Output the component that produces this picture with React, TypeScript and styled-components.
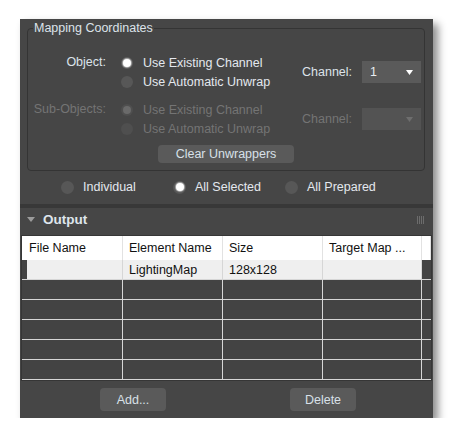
import React from "react";
import styled, { createGlobalStyle } from "styled-components";

const GlobalStyle = createGlobalStyle`
  html, body { margin: 0; padding: 0; background: #ffffff; }
  body { font-family: "Liberation Sans", Arial, sans-serif; font-size: 12.5px; }
  * { box-sizing: border-box; }
`;

const Page = styled.div`
  padding: 19px 0 0 20px;
`;

const Panel = styled.div`
  width: 413px;
  height: 399px;
  background: #464646;
  display: flex;
  flex-direction: column;
  box-shadow: 5px 5px 8px rgba(0, 0, 0, 0.45);
`;

const TopSection = styled.div`
  padding: 1px 8px 0 7px;
`;

const GroupBox = styled.fieldset`
  margin: 0;
  padding: 17px 3px 5px 0;
  border: 1px solid #343434;
  border-radius: 4px;
  min-width: 0;
`;

const Legend = styled.legend`
  margin-left: 5px;
  padding: 0 1px;
  line-height: 16px;
  color: #dce3ea;
`;

const GroupGrid = styled.div`
  display: grid;
  grid-template-columns: 78px 196px 60px 59px;
  grid-template-rows: 38px 38px 18px;
  row-gap: 9px;
`;

const FieldLabel = styled.div<{ $disabled?: boolean }>`
  text-align: right;
  line-height: 19px;
  color: ${(p) => (p.$disabled ? "#747474" : "#dde3ea")};
  white-space: nowrap;
`;

const OptionList = styled.div`
  display: flex;
  flex-direction: column;
  padding-left: 15px;
`;

const Option = styled.div<{ $disabled?: boolean; $gap?: number }>`
  display: flex;
  align-items: center;
  gap: ${(p) => p.$gap ?? 10}px;
  height: 19px;
  color: ${(p) => (p.$disabled ? "#747474" : "#e4e8ee")};
  white-space: nowrap;
`;

const RadioDot = styled.span<{ $checked?: boolean; $disabled?: boolean; $size?: number }>`
  flex: none;
  width: ${(p) => p.$size ?? 12}px;
  height: ${(p) => p.$size ?? 12}px;
  border-radius: 50%;
  background: ${(p) => (p.$disabled ? "#4f4f4f" : "#575757")};
  display: flex;
  align-items: center;
  justify-content: center;
  &::after {
    content: "";
    display: ${(p) => (p.$checked ? "block" : "none")};
    width: 8px;
    height: 8px;
    border-radius: 50%;
    background: ${(p) => (p.$disabled ? "#6a6a6a" : "#ffffff")};
    box-shadow: ${(p) => (p.$disabled ? "none" : "0 0 1px 1px rgba(255,255,255,0.5)")};
  }
`;

const ChannelLabel = styled.div<{ $disabled?: boolean }>`
  align-self: center;
  color: ${(p) => (p.$disabled ? "#747474" : "#dde3ea")};
  white-space: nowrap;
`;

const Dropdown = styled.div<{ $disabled?: boolean }>`
  align-self: center;
  height: 22px;
  background: ${(p) => (p.$disabled ? "#535353" : "#5a5a5a")};
  display: flex;
  align-items: center;
  justify-content: space-between;
  padding: 0 8px 0 8px;
  color: #e8ecf0;
`;

const Arrow = ({ color }: { color: string }) => (
  <svg width="7" height="5" viewBox="0 0 7 5">
    <path d="M0 0 H7 L3.5 5 Z" fill={color} />
  </svg>
);

const Button = styled.button<{ $w: number; $h: number }>`
  width: ${(p) => p.$w}px;
  height: ${(p) => p.$h}px;
  border: none;
  border-radius: 4px;
  background: #5a5a5a;
  color: #d8e0e8;
  font-family: "Liberation Sans", Arial, sans-serif;
  font-size: 12.5px;
  padding: 0;
`;

const ButtonCell = styled.div`
  grid-column: 1 / -1;
  display: flex;
  justify-content: center;
  padding-left: 3px;
  margin-top: -2px;
`;

const ModeRow = styled.div`
  height: 33px;
  display: grid;
  grid-template-columns: repeat(3, 112px);
  align-items: center;
  padding-left: 41px;
  padding-bottom: 1px;
`;

const Separator = styled.div`
  height: 4px;
  background: #383838;
`;

const RolloutHeader = styled.div`
  height: 23px;
  display: flex;
  align-items: center;
  padding: 0 8px 0 7px;
  gap: 8px;
  color: #dfe5ec;
  font-weight: bold;
  font-size: 13.5px;
`;

const Grip = styled.span`
  margin-left: auto;
  display: flex;
`;

const Table = styled.div`
  margin: 4px 1px 0 1px;
  border: 1px solid #363636;
  display: grid;
  grid-template-columns: 101px 100px 100px 99px 9px;
  grid-auto-rows: 20px;
  grid-template-rows: 24px;
  background: #434343;
`;

const HeadCell = styled.div<{ $first?: boolean }>`
  background: #ffffff;
  color: #111111;
  border-right: 1px solid #e2e2e2;
  display: flex;
  align-items: center;
  padding-left: ${(p) => (p.$first ? 7 : 6)}px;
  white-space: nowrap;
  overflow: hidden;
`;

const Cell = styled.div<{ $light?: boolean; $first?: boolean; $last?: boolean }>`
  background: ${(p) => (p.$light ? "#efefef" : "#434343")};
  color: #111111;
  border-right: ${(p) => (p.$last ? "none" : "1px solid #d6d6d6")};
  border-bottom: 1px solid #d6d6d6;
  display: flex;
  align-items: center;
  padding-left: 6px;
  white-space: nowrap;
  box-shadow: ${(p) => (p.$light && p.$first ? "inset 5px 0 0 #434343" : "none")};
`;

const ButtonBar = styled.div`
  flex: 1;
  display: flex;
  justify-content: center;
  align-items: flex-start;
  padding-top: 7px;
  padding-left: 3px;
  gap: 124px;
`;

const headers = ["File Name", "Element Name", "Size", "Target Map ...", ""];
const rows: string[][] = [
  ["", "LightingMap", "128x128", "", ""],
  ["", "", "", "", ""],
  ["", "", "", "", ""],
  ["", "", "", "", ""],
  ["", "", "", "", ""],
  ["", "", "", "", ""],
];

export default function App() {
  return (
    <>
      <GlobalStyle />
      <Page>
        <Panel>
          <TopSection>
            <GroupBox>
              <Legend>Mapping Coordinates</Legend>
              <GroupGrid>
                <FieldLabel>Object:</FieldLabel>
                <OptionList>
                  <Option>
                    <RadioDot $checked />
                    Use Existing Channel
                  </Option>
                  <Option>
                    <RadioDot />
                    Use Automatic Unwrap
                  </Option>
                </OptionList>
                <ChannelLabel>Channel:</ChannelLabel>
                <Dropdown>
                  <span>1</span>
                  <Arrow color="#ffffff" />
                </Dropdown>

                <FieldLabel $disabled>Sub-Objects:</FieldLabel>
                <OptionList>
                  <Option $disabled>
                    <RadioDot $checked $disabled />
                    Use Existing Channel
                  </Option>
                  <Option $disabled>
                    <RadioDot $disabled />
                    Use Automatic Unwrap
                  </Option>
                </OptionList>
                <ChannelLabel $disabled>Channel:</ChannelLabel>
                <Dropdown $disabled>
                  <span />
                  <Arrow color="#6e6e6e" />
                </Dropdown>

                <ButtonCell>
                  <Button $w={136} $h={18}>Clear Unwrappers</Button>
                </ButtonCell>
              </GroupGrid>
            </GroupBox>
          </TopSection>

          <ModeRow>
            <Option $gap={9}>
              <RadioDot $size={13} />
              Individual
            </Option>
            <Option $gap={9}>
              <RadioDot $size={13} $checked />
              All Selected
            </Option>
            <Option $gap={9}>
              <RadioDot $size={13} />
              All Prepared
            </Option>
          </ModeRow>

          <Separator />

          <RolloutHeader>
            <svg width="8" height="5" viewBox="0 0 8 5">
              <path d="M0 0 H8 L4 5 Z" fill="#9c9c9c" />
            </svg>
            Output
            <Grip>
              <svg width="8" height="8" viewBox="0 0 8 8">
                {[0, 2, 4, 6].map((x) => (
                  <rect key={x} x={x} y={0} width={1} height={8} fill="#6c6c6c" />
                ))}
              </svg>
            </Grip>
          </RolloutHeader>

          <Table>
            {headers.map((h, i) => (
              <HeadCell key={i} $first={i === 0}>
                {h}
              </HeadCell>
            ))}
            {rows.map((r, ri) =>
              r.map((c, ci) => (
                <Cell
                  key={`${ri}-${ci}`}
                  $light={ri === 0 && ci < 4}
                  $first={ci === 0}
                  $last={ci === 4}
                >
                  {c}
                </Cell>
              ))
            )}
          </Table>

          <ButtonBar>
            <Button $w={66} $h={23}>Add...</Button>
            <Button $w={66} $h={23}>Delete</Button>
          </ButtonBar>
        </Panel>
      </Page>
    </>
  );
}
